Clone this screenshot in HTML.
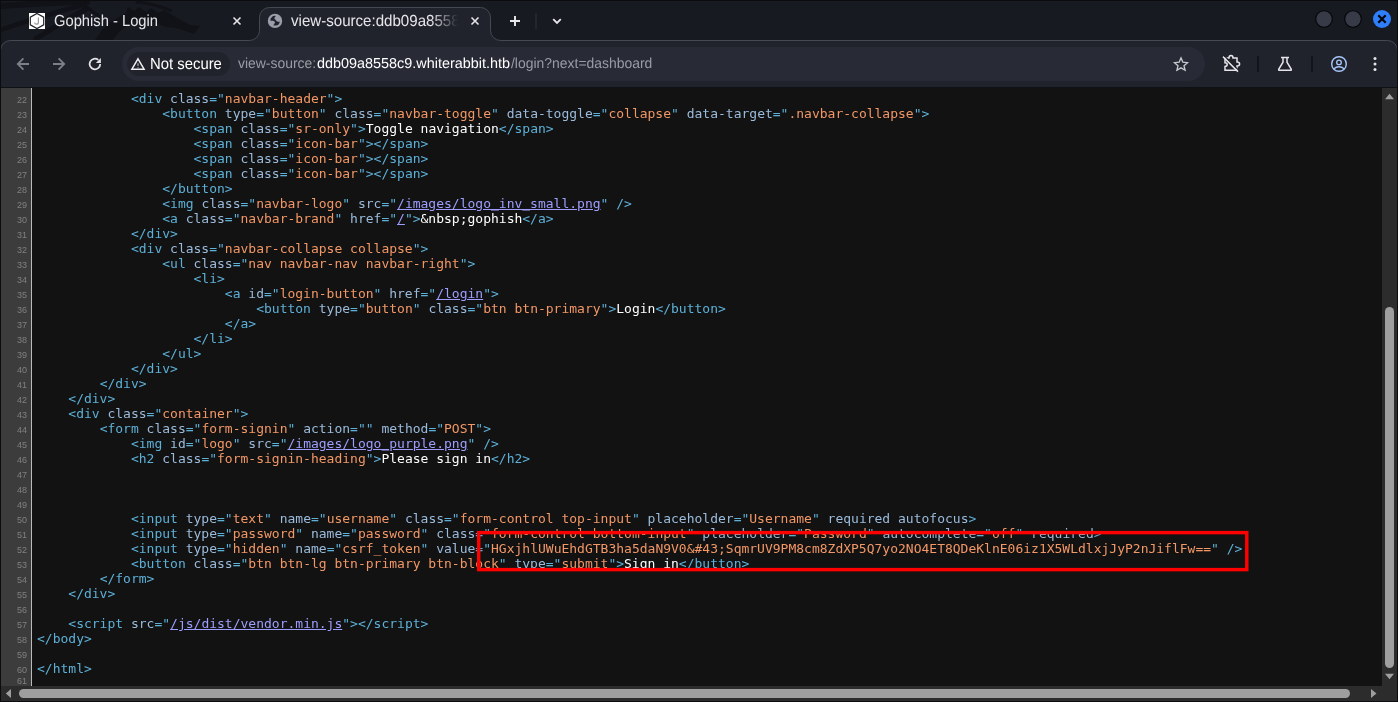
<!DOCTYPE html>
<html lang="en">
<head>
<meta charset="utf-8">
<title>view-source</title>
<style>
html,body{margin:0;padding:0}
body{width:1398px;height:702px;overflow:hidden;position:relative;background:#181a21;font-family:"Liberation Sans","DejaVu Sans",sans-serif;color:#fff}
#chrome{position:absolute;left:0;top:0;width:1398px;height:88px}
.ui{will-change:transform;position:absolute;white-space:nowrap;font-size:14.5px;line-height:20px;color:#e6e6ea}
.gp{text-rendering:geometricPrecision}
.sx{display:inline-block;transform-origin:0 15px}
#view{position:absolute;left:1px;top:88px;width:1381px;height:598px;background:#121212;overflow:hidden}
#gutter{position:absolute;left:0;top:0;width:30px;height:598px;background:#3c3c3c;border-right:1px solid #bbb}
#code{will-change:transform;position:absolute;left:0;top:-12px;width:1400px;font-family:"DejaVu Sans Mono","Liberation Mono",monospace;font-size:13px;line-height:15px;color:#fff}
.r{height:15px;white-space:pre;position:relative}
.r.last{height:10px}
.ln{position:absolute;left:0;top:0;width:26px;text-align:right;font-family:"Liberation Sans",sans-serif;font-size:9px;line-height:15px;color:#808080;padding-top:2px;height:13px}
.r.last .ln{line-height:10px;padding-top:0;top:0}
.c{position:absolute;left:36px;top:0}
.t{color:rgb(93,176,215)}
.n{color:rgb(155,187,220)}
.v{color:rgb(242,151,102)}
.l{color:rgb(158,158,255);text-decoration:underline}
#vs{position:absolute;left:1382px;top:88px;width:15px;height:598px;background:#2c2c2c}
#hs{position:absolute;left:1px;top:686px;width:1396px;height:15px;background:#2c2c2c}
.thumb{position:absolute;background:#9f9f9f;border-radius:5px}
#bord{position:absolute;left:0;top:0;width:1396px;height:700px;border:1px solid #0c0c0f;pointer-events:none}
</style>
</head>
<body>
<div id="chrome">
<svg width="1398" height="88" viewBox="0 0 1398 88" style="position:absolute;left:0;top:0">
  <rect x="0" y="0" width="1398" height="88" fill="#181a21"/>
  <!-- faint wallpaper dragon behind the tab strip -->
  <g fill="none" stroke="#111217" stroke-linecap="butt">
    <path d="M90,1.5 Q45,3 0,6" stroke-width="6"/>
    <path d="M86,4 Q45,15 0,30" stroke-width="4.5"/>
    <path d="M88,8 Q62,22 34,40" stroke-width="5"/>
    <path d="M80,2 L100,17" stroke-width="3"/>
    <path d="M136,2 Q156,4 172,11" stroke-width="3"/>
  </g>
  <path d="M126,13 L138,18 L128,25 L119,32 L113,40 L95,40 L102,30 L112,21 Z" fill="#111217"/>
  <path d="M128,7 L134,11 L139,7 L146,12 L151,8 L158,13 L164,10 L172,15 L181,20 L190,25 L200,26 L197,30 L194,34 L185,31 L176,28 L166,27 L158,24 L148,20 L138,18 L126,13 Z" fill="#111217"/>
  <!-- active tab + toolbar -->
  <path d="M0.5,88 L0.5,50.5 A10,10 0 0 1 10.5,40.5 L249.5,40.5 A10,10 0 0 0 259.5,30.5 L259.5,17.5 A10,10 0 0 1 269.5,7.5 L480.5,7.5 A10,10 0 0 1 490.5,17.5 L490.5,30.5 A10,10 0 0 0 500.5,40.5 L1387.5,40.5 A10,10 0 0 1 1397.5,50.5 L1397.5,88 Z" fill="#21232c" stroke="#474952" stroke-width="1"/>
  <rect x="0" y="87" width="1398" height="1" fill="#101114"/>
  <!-- omnibox -->
  <rect x="122" y="47" width="1083" height="34" rx="17" fill="#282a36"/>
  <rect x="127" y="52" width="103" height="24" rx="12" fill="#21232c"/>
  <!-- favicon -->
  <rect x="29" y="13" width="16" height="16" fill="#ffffff"/>
  <path d="M37,13.4 L43.7,17.2 L43.7,24.8 L37,28.6 L30.3,24.8 L30.3,17.2 Z" fill="none" stroke="#1d1d22" stroke-width="1.15"/>
  <path d="M38.4,17.4 L38.4,22.2 Q38.4,24.2 36.5,24.2 Q34.7,24.2 34.7,22.4" fill="none" stroke="#9a9aa0" stroke-width="1.2"/>
  <!-- tab close buttons -->
  <path d="M233.5,17.5 L240.5,24.5 M240.5,17.5 L233.5,24.5" stroke="#e4e4e9" stroke-width="1.6" fill="none"/>
  <path d="M471.5,17.5 L478.5,24.5 M478.5,17.5 L471.5,24.5" stroke="#e4e4e9" stroke-width="1.6" fill="none"/>
  <!-- globe -->
  <circle cx="275" cy="20.9" r="7.2" fill="#9a9ea9"/>
  <path d="M272.4,16.4 Q274,15.6 275.9,16 Q274.2,17.4 274.4,18.7 Q275.6,19.6 276.2,20.8 Q277.4,22.4 279.6,21.6 Q280,23 278.3,24.8 Q276.8,26 273.2,25.3 Q274.6,24.2 275,22.3 Q274.4,21 273.2,20.8 Q271.4,20.8 270.2,20.5 Q270.2,18.2 272.4,16.4 Z" fill="#21232c"/>
  <!-- new tab plus -->
  <path d="M510,21 L520,21 M515,16 L515,26" stroke="#e9e9ee" stroke-width="1.9" fill="none"/>
  <rect x="535" y="13" width="2" height="16" fill="#23252f"/>
  <path d="M553.2,19.2 L557,23 L560.8,19.2" stroke="#e9e9ee" stroke-width="1.8" fill="none"/>
  <!-- window controls -->
  <circle cx="1324" cy="19" r="8.3" fill="#373a47" stroke="#040507" stroke-width="1.1"/>
  <circle cx="1353" cy="19" r="8.3" fill="#373a47" stroke="#040507" stroke-width="1.1"/>
  <circle cx="1382" cy="19" r="9" fill="#2f7ffa"/>
  <path d="M1378.3,15.3 L1385.7,22.7 M1385.7,15.3 L1378.3,22.7" stroke="#05060a" stroke-width="2.2" fill="none"/>
  <!-- back / forward / reload -->
  <path d="M29,64 L18,64 M23.4,58.4 L17.8,64 L23.4,69.6" stroke="#7c7e88" stroke-width="1.8" fill="none"/>
  <path d="M53,64 L64,64 M58.6,58.4 L64.2,64 L58.6,69.6" stroke="#7c7e88" stroke-width="1.8" fill="none"/>
  <path d="M100.2,64 A5.3,5.3 0 1 1 98.3,59.9" stroke="#e3e3e8" stroke-width="1.8" fill="none"/>
  <path d="M100.9,58 L100.9,63 L95.9,63 Z" fill="#e3e3e8"/>
  <!-- not secure triangle -->
  <path d="M138,58.8 L144.1,69.2 L131.9,69.2 Z" fill="none" stroke="#eeeef2" stroke-width="1.5" stroke-linejoin="miter"/>
  <path d="M138,63.3 L138,66 M138,66.9 L138,67.8" stroke="#a8a9b0" stroke-width="1.2" fill="none"/>
  <!-- star -->
  <path transform="translate(1181 64.3) scale(0.93) translate(-1181 -64.3)" d="M1181,57.4 L1183,62 L1188,62.5 L1184.2,65.8 L1185.4,70.7 L1181,68.1 L1176.6,70.7 L1177.8,65.8 L1174,62.5 L1179,62 Z" fill="none" stroke="#c9cad0" stroke-width="1.4" stroke-linejoin="miter"/>
  <!-- extensions off -->
  <path d="M1225,58 L1229,58 Q1229,55.6 1231,55.6 Q1233,55.6 1233,58 L1237,58 L1237,62 Q1239.6,62 1239.6,64 Q1239.6,66 1237,66 L1237,70.2 L1225,70.2 L1225,66.5 Q1227.2,66.5 1227.2,64.6 Q1227.2,62.7 1225,62.7 Z" fill="none" stroke="#e6e6ea" stroke-width="1.5"/>
  <path d="M1223,56.6 L1238,71.6" stroke="#e6e6ea" stroke-width="1.5"/>
  <path d="M1224.1,55.6 L1239.1,70.6" stroke="#21232c" stroke-width="1.2"/>
  <rect x="1257" y="56" width="2" height="16" fill="#13141a"/>
  <!-- flask -->
  <path d="M1281,57.6 L1289,57.6 M1283,57.6 L1283,62.2 L1278.8,69.2 Q1278.3,70.2 1279.5,70.2 L1290.5,70.2 Q1291.7,70.2 1291.2,69.2 L1287,62.2 L1287,57.6" fill="none" stroke="#e6e6ea" stroke-width="1.5"/>
  <rect x="1311" y="56" width="2" height="16" fill="#13141a"/>
  <!-- profile -->
  <circle cx="1339" cy="64" r="7.3" fill="none" stroke="#a8c7fa" stroke-width="1.4"/>
  <circle cx="1339" cy="62.4" r="2.3" fill="none" stroke="#a8c7fa" stroke-width="1.3"/>
  <path d="M1333.6,68.9 Q1339,64.6 1344.4,68.9" fill="none" stroke="#a8c7fa" stroke-width="1.3"/>
  <!-- menu dots -->
  <circle cx="1375" cy="58.4" r="1.5" fill="#e6e6ea"/><circle cx="1375" cy="64" r="1.5" fill="#e6e6ea"/><circle cx="1375" cy="69.6" r="1.5" fill="#e6e6ea"/>
</svg>
<div class="ui gp" id="t1" style="left:53.6px;top:12px;font-size:16px"><span class="sx" style="transform:scaleX(0.921)">Gophish - Login</span></div>
<div class="ui gp" id="t2" style="left:291px;top:12px;font-size:16px;width:168px;overflow:hidden;-webkit-mask-image:linear-gradient(90deg,#000 0,#000 140px,transparent 167px);mask-image:linear-gradient(90deg,#000 0,#000 140px,transparent 167px)"><span class="sx" style="transform:scaleX(0.943)">view-source:ddb09a8558c9.whiterabbit.htb/login?next=dashboard</span></div>
<div class="ui gp" id="ns" style="left:149.8px;top:55px;font-size:16px;color:#fff"><span class="sx" style="transform:scaleX(0.929)">Not secure</span></div>
<div class="ui gp" id="u1" style="left:238.2px;top:54px;font-size:14.4px;color:#9a9ca5"><span class="sx" style="transform:scaleX(0.968)">view-source:</span></div>
<div class="ui gp" id="u2" style="left:317.3px;top:54px;font-size:14.4px;color:#fff"><span class="sx" style="transform:scaleX(1.001)">ddb09a8558c9.whiterabbit.htb</span></div>
<div class="ui gp" id="u3" style="left:510.6px;top:54px;font-size:14.4px;color:#9a9ca5"><span class="sx" style="transform:scaleX(0.968)">/login?next=dashboard</span></div>
</div>
<div id="view">
  <div id="gutter"></div>
  <div id="code">
<div class="r"><span class="ln">21</span><span class="c"></span></div>
<div class="r"><span class="ln">22</span><span class="c">            <span class="t">&lt;div <span class="n">class</span>=&quot;<span class="v">navbar-header</span>&quot;&gt;</span></span></div>
<div class="r"><span class="ln">23</span><span class="c">                <span class="t">&lt;button <span class="n">type</span>=&quot;<span class="v">button</span>&quot; <span class="n">class</span>=&quot;<span class="v">navbar-toggle</span>&quot; <span class="n">data-toggle</span>=&quot;<span class="v">collapse</span>&quot; <span class="n">data-target</span>=&quot;<span class="v">.navbar-collapse</span>&quot;&gt;</span></span></div>
<div class="r"><span class="ln">24</span><span class="c">                    <span class="t">&lt;span <span class="n">class</span>=&quot;<span class="v">sr-only</span>&quot;&gt;</span>Toggle navigation<span class="t">&lt;/span&gt;</span></span></div>
<div class="r"><span class="ln">25</span><span class="c">                    <span class="t">&lt;span <span class="n">class</span>=&quot;<span class="v">icon-bar</span>&quot;&gt;</span><span class="t">&lt;/span&gt;</span></span></div>
<div class="r"><span class="ln">26</span><span class="c">                    <span class="t">&lt;span <span class="n">class</span>=&quot;<span class="v">icon-bar</span>&quot;&gt;</span><span class="t">&lt;/span&gt;</span></span></div>
<div class="r"><span class="ln">27</span><span class="c">                    <span class="t">&lt;span <span class="n">class</span>=&quot;<span class="v">icon-bar</span>&quot;&gt;</span><span class="t">&lt;/span&gt;</span></span></div>
<div class="r"><span class="ln">28</span><span class="c">                <span class="t">&lt;/button&gt;</span></span></div>
<div class="r"><span class="ln">29</span><span class="c">                <span class="t">&lt;img <span class="n">class</span>=&quot;<span class="v">navbar-logo</span>&quot; <span class="n">src</span>=&quot;<span class="l">/images/logo_inv_small.png</span>&quot; /&gt;</span></span></div>
<div class="r"><span class="ln">30</span><span class="c">                <span class="t">&lt;a <span class="n">class</span>=&quot;<span class="v">navbar-brand</span>&quot; <span class="n">href</span>=&quot;<span class="l">/</span>&quot;&gt;</span>&amp;nbsp;gophish<span class="t">&lt;/a&gt;</span></span></div>
<div class="r"><span class="ln">31</span><span class="c">            <span class="t">&lt;/div&gt;</span></span></div>
<div class="r"><span class="ln">32</span><span class="c">            <span class="t">&lt;div <span class="n">class</span>=&quot;<span class="v">navbar-collapse collapse</span>&quot;&gt;</span></span></div>
<div class="r"><span class="ln">33</span><span class="c">                <span class="t">&lt;ul <span class="n">class</span>=&quot;<span class="v">nav navbar-nav navbar-right</span>&quot;&gt;</span></span></div>
<div class="r"><span class="ln">34</span><span class="c">                    <span class="t">&lt;li&gt;</span></span></div>
<div class="r"><span class="ln">35</span><span class="c">                        <span class="t">&lt;a <span class="n">id</span>=&quot;<span class="v">login-button</span>&quot; <span class="n">href</span>=&quot;<span class="l">/login</span>&quot;&gt;</span></span></div>
<div class="r"><span class="ln">36</span><span class="c">                            <span class="t">&lt;button <span class="n">type</span>=&quot;<span class="v">button</span>&quot; <span class="n">class</span>=&quot;<span class="v">btn btn-primary</span>&quot;&gt;</span>Login<span class="t">&lt;/button&gt;</span></span></div>
<div class="r"><span class="ln">37</span><span class="c">                        <span class="t">&lt;/a&gt;</span></span></div>
<div class="r"><span class="ln">38</span><span class="c">                    <span class="t">&lt;/li&gt;</span></span></div>
<div class="r"><span class="ln">39</span><span class="c">                <span class="t">&lt;/ul&gt;</span></span></div>
<div class="r"><span class="ln">40</span><span class="c">            <span class="t">&lt;/div&gt;</span></span></div>
<div class="r"><span class="ln">41</span><span class="c">        <span class="t">&lt;/div&gt;</span></span></div>
<div class="r"><span class="ln">42</span><span class="c">    <span class="t">&lt;/div&gt;</span></span></div>
<div class="r"><span class="ln">43</span><span class="c">    <span class="t">&lt;div <span class="n">class</span>=&quot;<span class="v">container</span>&quot;&gt;</span></span></div>
<div class="r"><span class="ln">44</span><span class="c">        <span class="t">&lt;form <span class="n">class</span>=&quot;<span class="v">form-signin</span>&quot; <span class="n">action</span>=&quot;<span class="v"></span>&quot; <span class="n">method</span>=&quot;<span class="v">POST</span>&quot;&gt;</span></span></div>
<div class="r"><span class="ln">45</span><span class="c">            <span class="t">&lt;img <span class="n">id</span>=&quot;<span class="v">logo</span>&quot; <span class="n">src</span>=&quot;<span class="l">/images/logo_purple.png</span>&quot; /&gt;</span></span></div>
<div class="r"><span class="ln">46</span><span class="c">            <span class="t">&lt;h2 <span class="n">class</span>=&quot;<span class="v">form-signin-heading</span>&quot;&gt;</span>Please sign in<span class="t">&lt;/h2&gt;</span></span></div>
<div class="r"><span class="ln">47</span><span class="c"></span></div>
<div class="r"><span class="ln">48</span><span class="c"></span></div>
<div class="r"><span class="ln">49</span><span class="c"></span></div>
<div class="r"><span class="ln">50</span><span class="c">            <span class="t">&lt;input <span class="n">type</span>=&quot;<span class="v">text</span>&quot; <span class="n">name</span>=&quot;<span class="v">username</span>&quot; <span class="n">class</span>=&quot;<span class="v">form-control top-input</span>&quot; <span class="n">placeholder</span>=&quot;<span class="v">Username</span>&quot; <span class="n">required</span> <span class="n">autofocus</span>&gt;</span></span></div>
<div class="r"><span class="ln">51</span><span class="c">            <span class="t">&lt;input <span class="n">type</span>=&quot;<span class="v">password</span>&quot; <span class="n">name</span>=&quot;<span class="v">password</span>&quot; <span class="n">class</span>=&quot;<span class="v">form-control bottom-input</span>&quot; <span class="n">placeholder</span>=&quot;<span class="v">Password</span>&quot; <span class="n">autocomplete</span>=&quot;<span class="v">off</span>&quot; <span class="n">required</span>&gt;</span></span></div>
<div class="r"><span class="ln">52</span><span class="c">            <span class="t">&lt;input <span class="n">type</span>=&quot;<span class="v">hidden</span>&quot; <span class="n">name</span>=&quot;<span class="v">csrf_token</span>&quot; <span class="n">value</span>=&quot;<span class="v">HGxjhlUWuEhdGTB3ha5daN9V0&amp;#43;SqmrUV9PM8cm8ZdXP5Q7yo2NO4ET8QDeKlnE06iz1X5WLdlxjJyP2nJiflFw==</span>&quot; /&gt;</span></span></div>
<div class="r"><span class="ln">53</span><span class="c">            <span class="t">&lt;button <span class="n">class</span>=&quot;<span class="v">btn btn-lg btn-primary btn-block</span>&quot; <span class="n">type</span>=&quot;<span class="v">submit</span>&quot;&gt;</span>Sign in<span class="t">&lt;/button&gt;</span></span></div>
<div class="r"><span class="ln">54</span><span class="c">        <span class="t">&lt;/form&gt;</span></span></div>
<div class="r"><span class="ln">55</span><span class="c">    <span class="t">&lt;/div&gt;</span></span></div>
<div class="r"><span class="ln">56</span><span class="c"></span></div>
<div class="r"><span class="ln">57</span><span class="c">    <span class="t">&lt;script <span class="n">src</span>=&quot;<span class="l">/js/dist/vendor.min.js</span>&quot;&gt;</span><span class="t">&lt;/script&gt;</span></span></div>
<div class="r"><span class="ln">58</span><span class="c"><span class="t">&lt;/body&gt;</span></span></div>
<div class="r"><span class="ln">59</span><span class="c"></span></div>
<div class="r"><span class="ln">60</span><span class="c"><span class="t">&lt;/html&gt;</span></span></div>
<div class="r last"><span class="ln">61</span></div>
  </div>
</div>
<div id="vs"><div class="thumb" style="left:3px;top:219px;width:9px;height:361px"></div>
<svg width="15" height="598" style="position:absolute;left:0;top:0"><path d="M3,11.2 L12,11.2 L7.5,5.7 Z M3,585.8 L12,585.8 L7.5,591.3 Z" fill="#9f9f9f"/></svg></div>
<div id="hs"><div class="thumb" style="left:18px;top:3px;width:1331px;height:9px"></div>
<svg width="1396" height="15" style="position:absolute;left:0;top:0"><path d="M10,3 L10,12 L4.8,7.5 Z M1370,3 L1370,12 L1375.5,7.5 Z" fill="#9f9f9f"/></svg></div>
<svg id="redbox" width="1398" height="702" style="position:absolute;left:0;top:0;pointer-events:none"><rect x="478.72" y="532.62" width="768.05" height="37" fill="none" stroke="#ff0000" stroke-width="3.45"/></svg>
<div id="bord"></div>
</body>
</html>
